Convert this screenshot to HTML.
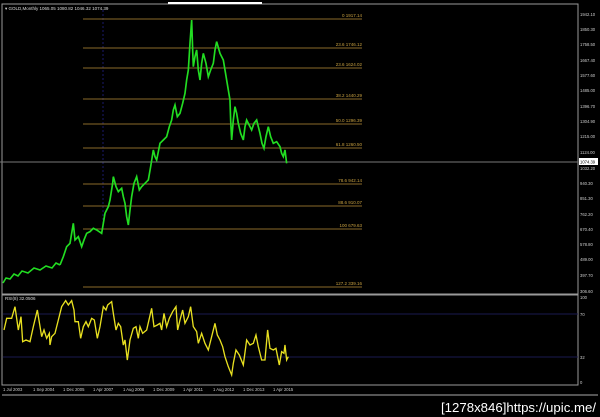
<!DOCTYPE html><html><head><style>
body{margin:0;background:#000;width:600px;height:417px;overflow:hidden;font-family:"Liberation Sans",sans-serif}
svg{display:block}
text{font-family:"Liberation Sans",sans-serif}
</style></head><body>
<svg width="600" height="417" viewBox="0 0 600 417">
<rect width="600" height="417" fill="#000"/>
<rect x="2" y="4" width="576" height="290" fill="none" stroke="#9a9a9a" stroke-width="1"/>
<rect x="2" y="295" width="576" height="90" fill="none" stroke="#9a9a9a" stroke-width="1"/>
<line x1="2" y1="395" x2="598" y2="395" stroke="#aaa"/>
<line x1="168" y1="3" x2="262" y2="3" stroke="#fff" stroke-width="2"/>
<text x="5" y="10" fill="#ddd" font-size="4.5">▾ GOLD,Monthly  1065.05  1080.82  1046.32  1074.39</text>
<line x1="103" y1="10" x2="103" y2="225" stroke="#1a1a6a" stroke-dasharray="2,2"/>
<g stroke="#8a6a2a" stroke-width="1">
<line x1="83" y1="19" x2="362" y2="19"/><line x1="83" y1="48" x2="362" y2="48"/>
<line x1="83" y1="68" x2="362" y2="68"/><line x1="83" y1="99" x2="362" y2="99"/>
<line x1="83" y1="124" x2="362" y2="124"/><line x1="83" y1="148" x2="362" y2="148"/>
<line x1="83" y1="184" x2="362" y2="184"/><line x1="83" y1="206" x2="362" y2="206"/>
<line x1="83" y1="229" x2="362" y2="229"/><line x1="83" y1="287" x2="362" y2="287"/>
</g>
<g fill="#c8a040" font-size="4.5" text-anchor="end">
<text x="362" y="17">0 1917.14</text><text x="362" y="46">23.6 1746.12</text>
<text x="362" y="66">23.6 1624.02</text><text x="362" y="97">38.2 1440.29</text>
<text x="362" y="122">50.0 1296.39</text><text x="362" y="146">61.8 1260.50</text>
<text x="362" y="182">78.6 942.14</text><text x="362" y="204">88.6 910.07</text>
<text x="362" y="227">100 679.63</text><text x="362" y="285">127.2 339.16</text>
</g>
<line x1="0" y1="162" x2="578" y2="162" stroke="#777"/>
<polyline fill="none" stroke="#22dd22" stroke-width="1.6" points="3,283 6,278 10,279 14,274 18,276 22,271 28,273 34,268 40,270 46,266 52,268 56,263 60,265"/>
<g transform="translate(60,10) scale(0.3333)">
<polyline fill="none" stroke="#22dd22" stroke-width="5" points="0,765 10,740 20,710 30,700 40,640 45,690 55,680 65,710 72,690 80,670 90,665 100,655 110,660 125,670 130,640 135,610 145,590 150,570 158,520 160,500 168,530 175,545 185,535 190,560 195,580 200,620 205,645 210,600 215,560 222,520 230,500 238,540 245,530 255,520 265,510 272,470 280,420 285,440 290,450 296,420 300,400 310,390 320,380 328,350 335,330 340,300 345,285 352,320 360,310 368,280 375,250 380,210 385,180 390,100 395,30 398,120 400,170 405,140 410,120 415,180 420,210 425,160 430,130 438,160 445,200 452,180 460,160 465,120 470,95 480,130 490,150 495,180 500,210 505,240 510,270 512,330 515,390 520,330 525,290 530,310 535,340 542,370 550,390 555,350 560,330 565,340 575,360 582,340 590,330 595,350 600,370 606,400 612,415 618,380 625,350 632,380 640,400 650,395 660,410 665,430 670,440 675,420 680,460"/>
</g>
<line x1="3" y1="314" x2="578" y2="314" stroke="#1a1a50"/>
<line x1="3" y1="357" x2="578" y2="357" stroke="#1a1a50"/>
<g transform="translate(0,290) scale(0.3333)">
<polyline fill="none" stroke="#e8e020" stroke-width="4" points="12,120 20,85 35,85 45,50 55,120 63,80 68,155 78,150 90,155 100,110 112,60 125,140 132,120 140,145 148,130 150,165 155,140 165,130 175,90 185,50 197,32 205,45 215,32 222,60 225,95 235,95 242,145 250,110 258,95 265,110 275,85 283,90 292,145 300,110 310,50 318,60 323,45 335,35 340,70 348,120 355,100 362,110 370,165 375,150 382,210 390,150 400,115 408,110 415,145 420,110 428,130 440,120 455,55 462,110 472,105 480,100 485,120 492,70 500,110 508,85 518,65 528,50 533,120 540,90 548,60 555,100 565,80 572,50 580,110 590,125 595,160 605,130 615,160 625,180 635,140 645,100 652,135 660,150 668,170 675,200 685,230 695,255 700,220 708,180 718,195 730,225 740,150 750,165 760,160 768,135 775,170 785,210 795,210 803,120 810,175 820,180 828,175 838,225 845,185 852,190 855,165 860,210 865,200"/>
</g>
<text x="5" y="300" fill="#ddd" font-size="4.5">RSI(8) 32.0506</text>
<g fill="#ccc" font-size="4.2">
<text x="580" y="16">1942.10</text><text x="580" y="31">1850.30</text><text x="580" y="46">1758.50</text>
<text x="580" y="62">1667.40</text><text x="580" y="77">1577.60</text><text x="580" y="92">1485.00</text>
<text x="580" y="108">1396.70</text><text x="580" y="123">1304.90</text><text x="580" y="138">1215.00</text>
<text x="580" y="154">1124.00</text><text x="580" y="170">1032.20</text><text x="580" y="185">940.30</text>
<text x="580" y="200">851.30</text><text x="580" y="216">762.20</text><text x="580" y="231">670.40</text>
<text x="580" y="246">578.80</text><text x="580" y="261">489.00</text><text x="580" y="277">397.70</text>
<text x="580" y="293">306.60</text>
<text x="580" y="299">100</text><text x="580" y="316">70</text><text x="580" y="359">32</text><text x="580" y="384">0</text>
</g>
<rect x="579" y="158" width="19" height="7" fill="#fff"/>
<text x="580" y="163.5" fill="#000" font-size="4.2">1074.39</text>
<g fill="#ccc" font-size="4.2">
<text x="3" y="391">1 Jul 2003</text><text x="33" y="391">1 Sep 2004</text><text x="63" y="391">1 Dec 2005</text>
<text x="93" y="391">1 Apr 2007</text><text x="123" y="391">1 Aug 2008</text><text x="153" y="391">1 Dec 2009</text>
<text x="183" y="391">1 Apr 2011</text><text x="213" y="391">1 Aug 2012</text><text x="243" y="391">1 Dec 2013</text>
<text x="273" y="391">1 Apr 2015</text>
</g>
<text x="596" y="412" fill="#fff" font-size="13" text-anchor="end" font-family="Liberation Sans Narrow, Liberation Sans" textLength="155" lengthAdjust="spacingAndGlyphs">[1278x846]https://upic.me/</text>
</svg>
</body></html>
